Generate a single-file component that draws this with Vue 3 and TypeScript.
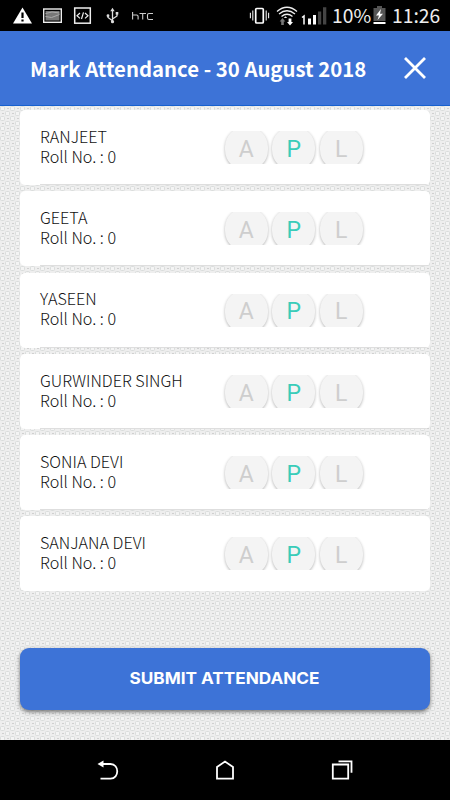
<script setup lang="ts">
interface Student {
  name: string
  roll: number
}

const students: Student[] = [
  { name: 'RANJEET', roll: 0 },
  { name: 'GEETA', roll: 0 },
  { name: 'YASEEN', roll: 0 },
  { name: 'GURWINDER SINGH', roll: 0 },
  { name: 'SONIA DEVI', roll: 0 },
  { name: 'SANJANA DEVI', roll: 0 },
]
const marks = ['A', 'P', 'L']
const selected = 'P'
</script>

<template>
  <div class="screen">
    <div class="status">
      <svg class="status-icons" width="160" height="31" viewBox="0 0 160 31" fill="none">
        <path d="M22.500 7.500 32 23.500H13Z" fill="#fff" />
        <path d="M22.500 12.500v5.500M22.500 19.500v2" stroke="#000" stroke-width="2.200" />
        <rect x="43.700" y="9" width="17.600" height="13.300" stroke="#eee" stroke-width="1.400" />
        <rect x="45.500" y="11" width="14" height="9.500" fill="#777" />
        <path d="M45.500 13.500 52 12l7.500 1M45.500 16.500l6 1 8-3" stroke="#aaa" />
        <rect x="74.700" y="8" width="15.600" height="15.200" stroke="#eee" stroke-width="1.500" />
        <path d="m80 13-3 2.700 3 2.700m5-5.400 3 2.700-3 2.700m-1.500-6-2 6.600" stroke="#eee" stroke-width="1.200" />
        <path d="M112.500 10v12M108 15.500v2l4.500 3.200M117 13v3l-4.500 3" stroke="#ddd" stroke-width="1.300" />
        <path d="m112.500 7.800 2.200 3.500h-4.400Z" fill="#ddd" />
        <circle cx="112.500" cy="21.700" r="1.600" fill="#ddd" /><circle cx="108" cy="15.700" r="1.400" fill="#ddd" />
        <path d="M115.700 12h2.600v2.600h-2.600Z" fill="#ddd" />
        <path d="M132.600 12v7.500m0-4.500h4q1.500 0 1.500 1.500v3M139.500 13.500h6.500m-3.300 0v6M153 13.500h-4q-1.500 0-1.500 1.500v3q0 1.500 1.500 1.500h4" stroke="#ccc" stroke-width="1.100" />
      </svg>
      <div class="status-right">
        <svg width="82" height="31" viewBox="248 0 82 31" fill="none">
          <rect x="255.700" y="8.500" width="7.600" height="14.500" rx="1" stroke="#fff" stroke-width="1.700" />
          <path d="M252.800 10.500v10M250.400 12.800v5.500M266.200 10.500v10M268.600 12.800v5.500" stroke="#eee" stroke-width="1.100" />
          <path d="M277 11.500q10-8.500 20 0M279 14q8-6.500 16 0M281.500 16.500q5.500-4.500 11 0" stroke="#eee" stroke-width="1.300" />
          <path d="m285.500 16.300 1.700 1.700h-3.400Z" fill="#eee" />
          <path d="m282.500 18 2.800 3.400h-1.500V25h-2.600v-3.600h-1.500Z" fill="#777" />
          <path d="m290 25.500 3-3.500h-1.600v-3.500h-2.800V22H287Z" fill="#fff" />
          <path d="M302 17.500l2-1.500v8.500" stroke="#fff" stroke-width="1.500" />
          <path d="M308 18.500h3v6h-3ZM313 15h3v9.500h-3Z" fill="#fff" />
          <path d="M318 11.500h3.200v13H318ZM323 7.300h3.300v17.200H323Z" fill="#444" />
        </svg>
        <span class="battery-text">10%</span>
        <svg class="battery" width="13" height="19" viewBox="0 0 13 19">
          <path d="M4 0h5v2h3.500v13H.500V2H4Z" fill="#555" />
          <path d="M8 3 3 9.500h3L4.500 14 10 7.800H7Z" fill="#fff" />
          <path d="M.500 16h12v2H.500Z" fill="#fff" />
        </svg>
        <span class="clock">11:26</span>
      </div>
    </div>

    <header class="header">
      <h1>Mark Attendance - 30 August 2018</h1>
      <svg class="close" width="24" height="24" viewBox="0 0 24 24">
        <path d="m2 2 20 20M22 2 2 22" stroke="#fff" stroke-width="2.800" />
      </svg>
    </header>

    <main class="content">
      <svg class="weave" width="450" height="634">
        <defs>
          <pattern id="weave" width="10" height="10" patternUnits="userSpaceOnUse">
            <rect width="10" height="10" fill="#eeeeee" />
            <g fill="#f4f4f4" stroke="#dadddc" stroke-width="1">
              <rect x="0.500" y="0.500" width="4" height="4" rx="1" />
              <rect x="5.500" y="5.500" width="4" height="4" rx="1" />
            </g>
            <path d="M7 2h2v1H7ZM2 7h2v1H2Z" fill="#d0d0d0" />
          </pattern>
        </defs>
        <rect width="450" height="634" fill="url(#weave)" />
      </svg>
      <section class="list">
        <article v-for="student in students" :key="student.name" class="card">
          <div class="info">
            <div>{{ student.name }}</div>
            <div>Roll No. : {{ student.roll }}</div>
          </div>
          <div class="marks">
            <button v-for="mark in marks" :key="mark" class="mark" :class="{ active: mark === selected }">
              <span>{{ mark }}</span>
            </button>
          </div>
        </article>
      </section>
      <button class="submit"><span>SUBMIT ATTENDANCE</span></button>
    </main>

    <nav class="navbar">
      <svg width="24" height="24" viewBox="0 0 24 24" fill="none" stroke="#fff" stroke-width="1.800">
        <path d="M5 6h9.500c9 0 9 14.600 0 14.600H4.500" /><path d="m1.500 6 6-3.500v7Z" fill="#fff" stroke="none" />
      </svg>
      <svg width="24" height="24" viewBox="0 0 24 24" fill="none" stroke="#fff" stroke-width="1.800">
        <path d="M4 20.700V9l8-5.400L20 9v11.700Z" />
      </svg>
      <svg width="24" height="24" viewBox="0 0 24 24" fill="none" stroke="#fff" stroke-width="1.800">
        <path d="M2.800 6.500h15.400v14.200H2.800ZM8.500 3.300h13v11.500" />
      </svg>
    </nav>
  </div>
</template>

<style>
body {
  margin: 0;
}
</style>

<style scoped>
.screen {
  width: 450px;
  height: 800px;
  display: flex;
  flex-direction: column;
  overflow: hidden;
  font-family: 'Noto Sans CJK SC', 'Open Sans', sans-serif;
  background: #ebebeb;
}
.status {
  height: 31px;
  flex: none;
  display: flex;
  justify-content: space-between;
  background: #000;
  color: #eee;
}
.status-right {
  display: flex;
  align-items: center;
  padding-right: 10px;
  font-family: 'Noto Sans CJK SC', sans-serif;
  font-size: 19.300px;
  line-height: 29px;
}
.status-right span {
  margin-top: -1px;
}
.battery-text {
  width: 41px;
  margin-left: 2px;
}
.battery {
  margin-right: 6px;
}
.clock {
  width: 48px;
  white-space: nowrap;
}
.header {
  height: 75px;
  flex: none;
  box-sizing: border-box;
  display: flex;
  align-items: center;
  justify-content: space-between;
  padding: 0 23px 0 30px;
  background: #3d73d7;
  border-bottom: 1px solid #1760cf;
}
.header h1 {
  margin: 0;
  font-size: 20.350px;
  line-height: 30px;
  font-weight: 700;
  color: #fff;
  white-space: nowrap;
}
.content {
  position: relative;
  height: 634px;
  flex: none;
  box-sizing: border-box;
  padding: 4px 20px 0;
}
.weave {
  position: absolute;
  left: 0;
  top: 0;
}
.list {
  position: relative;
  display: flex;
  flex-direction: column;
  gap: 6.300px;
}
.card {
  height: 75px;
  box-sizing: border-box;
  display: flex;
  padding: 15.700px 0 0 20px;
  border-radius: 5px;
  background: linear-gradient(#dedede, #dedede) 20px 74px / 100% 1px no-repeat #fff;
}
.card:last-child {
  background: #fff;
}
.info {
  width: 182px;
  font-size: 16.150px;
  line-height: 20px;
  font-weight: 300;
  color: #111;
  white-space: nowrap;
}
.marks {
  display: flex;
  height: 33px;
  margin-top: 5.300px;
  padding: 0 3px 0 2.700px;
  gap: 4.500px;
  overflow: hidden;
}
.mark {
  width: 43px;
  height: 43px;
  margin: -4px 0 0;
  padding: 1.600px 0 0;
  border: 0;
  border-radius: 20px;
  background: #f4f4f4;
  box-shadow: 0 1px 3px rgba(0, 0, 0, 0.3);
  font-family: Roboto, sans-serif;
  font-size: 23px;
  font-weight: 400;
  color: #cecece;
}
.mark.active {
  color: #3accb9;
}
.submit {
  position: relative;
  width: 410px;
  height: 62px;
  margin: 57px 0 0;
  padding: 0 0 2px;
  border: 0;
  border-radius: 9px;
  background: #3d73d7;
  box-shadow: 0 2px 4px rgba(0, 0, 0, 0.5);
  font-family: Inter, sans-serif;
  font-size: 16px;
  font-weight: 700;
  color: #fff;
}
.submit span {
  display: inline-block;
  transform: scaleX(1.073);
}
.navbar {
  height: 60px;
  flex: none;
  box-sizing: border-box;
  display: flex;
  justify-content: space-between;
  padding: 18px 96px 0;
  background: #000;
}
</style>
